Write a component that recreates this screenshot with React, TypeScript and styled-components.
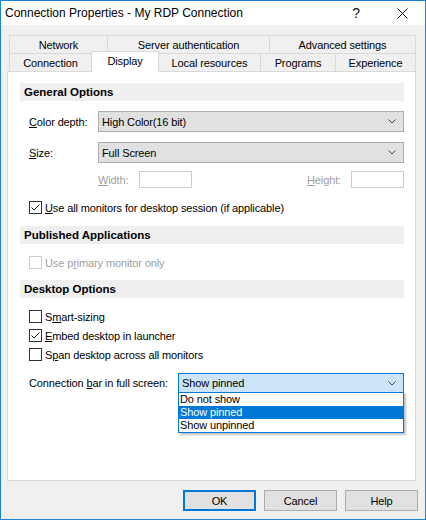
import React, { FC, ReactNode } from "react";
import styled, { createGlobalStyle } from "styled-components";

const GlobalStyle = createGlobalStyle`
  html, body {
    margin: 0;
    padding: 0;
    background: #ffffff;
  }
  body {
    font-family: "Liberation Sans", Arial, sans-serif;
    font-size: 11px;
    letter-spacing: -0.12px;
    color: #000000;
  }
  * {
    box-sizing: border-box;
  }
`;

const Styles = {
  Window: styled.div`
    width: 426px;
    height: 520px;
    border: 1px solid #1883d7;
    background: #f0f0f0;
    display: flex;
    flex-direction: column;
  `,
  TitleBar: styled.div`
    height: 24px;
    background: #ffffff;
    display: flex;
    align-items: center;
  `,
  Title: styled.div`
    flex: 1;
    padding-left: 4px;
    font-size: 12px;
    letter-spacing: 0;
  `,
  CaptionBtn: styled.div`
    width: 46px;
    height: 24px;
    display: flex;
    align-items: center;
    justify-content: center;
    font-size: 14px;
    color: #111;
  `,
  Body: styled.div`
    flex: 1;
    padding: 10px 0 0 6px;
    display: flex;
    flex-direction: column;
  `,
  Tabs: styled.div`
    margin-left: 2px;
    width: 407px;
    display: flex;
    flex-direction: column;
  `,
  TabRow: styled.div`
    display: flex;
    align-items: flex-end;
    height: 18px;
  `,
  Tab: styled.div<{ $w: number; $active?: boolean }>`
    width: ${({ $w }) => $w}px;
    height: ${({ $active }) => ($active ? 21 : 18)}px;
    margin-bottom: ${({ $active }) => ($active ? -1 : 0)}px;
    position: ${({ $active }) => ($active ? "relative" : "static")};
    z-index: 1;
    background: ${({ $active }) => ($active ? "#ffffff" : "#f0f0f0")};
    border: 1px solid #d9d9d9;
    border-bottom: none;
    display: flex;
    align-items: center;
    justify-content: center;
    padding-bottom: ${({ $active }) => ($active ? 2 : 0)}px;
    & + & {
      margin-left: -1px;
    }
  `,
  Panel: styled.div`
    width: 409px;
    height: 410px;
    background: #ffffff;
    border: 1px solid #d9d9d9;
    padding: 11px 11px 0 12px;
    display: flex;
    flex-direction: column;
  `,
  SectionHeader: styled.div<{ $top?: number }>`
    height: 18px;
    margin-top: ${({ $top }) => $top ?? 0}px;
    background: #efefef;
    font-weight: bold;
    font-size: 11.5px;
    letter-spacing: 0;
    padding-left: 4px;
    display: flex;
    align-items: center;
  `,
  FieldRow: styled.div<{ $top?: number }>`
    display: flex;
    align-items: center;
    margin-top: ${({ $top }) => $top ?? 0}px;
    padding-left: 9px;
  `,
  Label: styled.div<{ $w?: number; $disabled?: boolean }>`
    width: ${({ $w }) => ($w ? `${$w}px` : "auto")};
    flex-shrink: 0;
    color: ${({ $disabled }) => ($disabled ? "#a0a0a0" : "#000")};
  `,
  Select: styled.div<{ $w: number; $h: number; $focus?: boolean }>`
    position: relative;
    width: ${({ $w }) => $w}px;
    height: ${({ $h }) => $h}px;
    background: ${({ $focus }) => ($focus ? "#cce4f7" : "#e1e1e1")};
    border: 1px solid ${({ $focus }) => ($focus ? "#0078d7" : "#adadad")};
    display: flex;
    align-items: center;
    padding: 0 7px 0 3px;
  `,
  SelectText: styled.div`
    flex: 1;
  `,
  SizeRow: styled.div`
    display: flex;
    align-items: center;
    margin-top: 8px;
    padding-left: 78px;
  `,
  TextBox: styled.div`
    width: 53px;
    height: 17px;
    border: 1px solid #cccccc;
    background: #fff;
  `,
  Spacer: styled.div`
    flex: 1;
  `,
  CheckRow: styled.div<{ $top?: number; $disabled?: boolean }>`
    display: flex;
    align-items: center;
    margin-top: ${({ $top }) => $top ?? 0}px;
    padding-left: 9px;
    height: 13px;
    color: ${({ $disabled }) => ($disabled ? "#a0a0a0" : "#000")};
  `,
  Box: styled.div<{ $disabled?: boolean }>`
    width: 13px;
    height: 13px;
    border: 1px solid ${({ $disabled }) => ($disabled ? "#cccccc" : "#333333")};
    background: #fff;
    margin-right: 3px;
    display: flex;
    align-items: center;
    justify-content: center;
  `,
  DropList: styled.div`
    position: absolute;
    top: 100%;
    left: -1px;
    right: -1px;
    background: #fff;
    border: 1px solid #0078d7;
    box-shadow: 2px 2px 2px rgba(0, 0, 0, 0.25);
    z-index: 5;
  `,
  DropItem: styled.div<{ $sel?: boolean }>`
    height: 13px;
    line-height: 13px;
    padding-left: 1px;
    background: ${({ $sel }) => ($sel ? "#0078d7" : "transparent")};
    color: ${({ $sel }) => ($sel ? "#fff" : "#000")};
  `,
  ButtonRow: styled.div`
    display: flex;
    justify-content: flex-end;
    gap: 8px;
    margin-top: 9px;
    padding-right: 7px;
  `,
  Button: styled.div<{ $default?: boolean }>`
    width: 73px;
    height: 21px;
    background: #e1e1e1;
    border: ${({ $default }) => ($default ? "2px solid #0078d7" : "1px solid #adadad")};
    display: flex;
    align-items: center;
    justify-content: center;
  `,
};

const Chevron: FC = () => (
  <svg width="8" height="5" viewBox="0 0 8 5">
    <polyline points="0.5,0.5 4,4 7.5,0.5" fill="none" stroke="#404040" strokeWidth="1" />
  </svg>
);

const CloseIcon: FC = () => (
  <svg width="11" height="11" viewBox="0 0 11 11">
    <path d="M0.5 0.5 L10.5 10.5 M10.5 0.5 L0.5 10.5" stroke="#111" strokeWidth="1" />
  </svg>
);

const CheckMark: FC = () => (
  <svg width="11" height="11" viewBox="0 0 11 11">
    <polyline points="1.5,5.5 4,8 9.5,2.5" fill="none" stroke="#222" strokeWidth="1" />
  </svg>
);

interface CheckProps {
  checked?: boolean;
  disabled?: boolean;
  top?: number;
  children: ReactNode;
}

const Check: FC<CheckProps> = ({ checked, disabled, top, children }) => (
  <Styles.CheckRow $top={top} $disabled={disabled}>
    <Styles.Box $disabled={disabled}>{checked && <CheckMark />}</Styles.Box>
    <span>{children}</span>
  </Styles.CheckRow>
);

const App: FC = () => {
  return (
    <>
      <GlobalStyle />
      <Styles.Window>
        <Styles.TitleBar>
          <Styles.Title>Connection Properties - My RDP Connection</Styles.Title>
          <Styles.CaptionBtn>?</Styles.CaptionBtn>
          <Styles.CaptionBtn>
            <CloseIcon />
          </Styles.CaptionBtn>
        </Styles.TitleBar>
        <Styles.Body>
          <Styles.Tabs>
            <Styles.TabRow>
              <Styles.Tab $w={99}>Network</Styles.Tab>
              <Styles.Tab $w={163}>Server authentication</Styles.Tab>
              <Styles.Tab $w={147}>Advanced settings</Styles.Tab>
            </Styles.TabRow>
            <Styles.TabRow>
              <Styles.Tab $w={83}>Connection</Styles.Tab>
              <Styles.Tab $w={68} $active>
                Display
              </Styles.Tab>
              <Styles.Tab $w={103}>Local resources</Styles.Tab>
              <Styles.Tab $w={76}>Programs</Styles.Tab>
              <Styles.Tab $w={81}>Experience</Styles.Tab>
            </Styles.TabRow>
          </Styles.Tabs>
          <Styles.Panel>
            <Styles.SectionHeader>General Options</Styles.SectionHeader>
            <Styles.FieldRow $top={10}>
              <Styles.Label $w={69}>
                <u>C</u>olor depth:
              </Styles.Label>
              <Styles.Select $w={306} $h={21}>
                <Styles.SelectText>High Color(16 bit)</Styles.SelectText>
                <Chevron />
              </Styles.Select>
            </Styles.FieldRow>
            <Styles.FieldRow $top={10}>
              <Styles.Label $w={69}>
                <u>S</u>ize:
              </Styles.Label>
              <Styles.Select $w={306} $h={21}>
                <Styles.SelectText>Full Screen</Styles.SelectText>
                <Chevron />
              </Styles.Select>
            </Styles.FieldRow>
            <Styles.SizeRow>
              <Styles.Label $w={41} $disabled>
                <u>W</u>idth:
              </Styles.Label>
              <Styles.TextBox />
              <Styles.Spacer />
              <Styles.Label $w={44} $disabled>
                <u>H</u>eight:
              </Styles.Label>
              <Styles.TextBox />
            </Styles.SizeRow>
            <Check checked top={13}>
              <u>U</u>se all monitors for desktop session (if applicable)
            </Check>
            <Styles.SectionHeader $top={12}>Published Applications</Styles.SectionHeader>
            <Check disabled top={12}>
              Use p<u>r</u>imary monitor only
            </Check>
            <Styles.SectionHeader $top={11}>Desktop Options</Styles.SectionHeader>
            <Check top={12}>
              S<u>m</u>art-sizing
            </Check>
            <Check checked top={6}>
              <u>E</u>mbed desktop in launcher
            </Check>
            <Check top={6}>
              S<u>p</u>an desktop across all monitors
            </Check>
            <Styles.FieldRow $top={12}>
              <Styles.Label $w={149}>
                Connection <u>b</u>ar in full screen:
              </Styles.Label>
              <Styles.Select $w={226} $h={20} $focus>
                <Styles.SelectText>Show pinned</Styles.SelectText>
                <Chevron />
                <Styles.DropList>
                  <Styles.DropItem>Do not show</Styles.DropItem>
                  <Styles.DropItem $sel>Show pinned</Styles.DropItem>
                  <Styles.DropItem>Show unpinned</Styles.DropItem>
                </Styles.DropList>
              </Styles.Select>
            </Styles.FieldRow>
          </Styles.Panel>
          <Styles.ButtonRow>
            <Styles.Button $default>OK</Styles.Button>
            <Styles.Button>Cancel</Styles.Button>
            <Styles.Button>Help</Styles.Button>
          </Styles.ButtonRow>
        </Styles.Body>
      </Styles.Window>
    </>
  );
};

export default App;
